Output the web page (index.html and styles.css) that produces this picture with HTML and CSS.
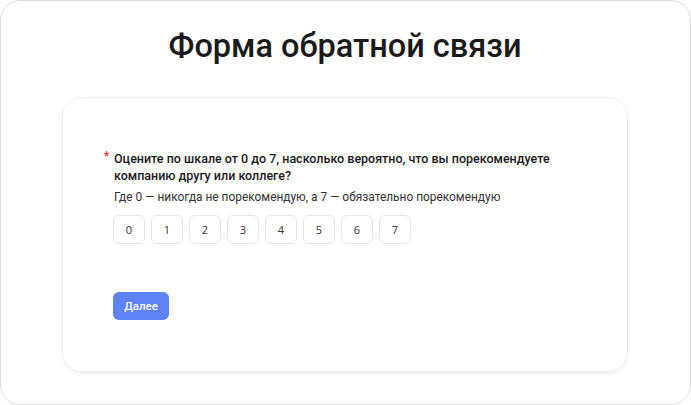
FILE: index.html
```html
<!DOCTYPE html>
<html lang="ru">
<head>
<meta charset="utf-8">
<link rel="stylesheet" href="styles.css">
</head>
<body>
<div class="frame">
  <h1 class="title">Форма обратной связи</h1>
  <div class="card">
    <div class="question">
      <div class="label"><span class="req">*</span>Оцените по шкале от 0 до 7, насколько вероятно, что вы порекомендуете компанию другу или коллеге?</div>
      <div class="hint">Где 0 — никогда не порекомендую, а 7 — обязательно порекомендую</div>
      <div class="scale">
        <button class="opt">0</button>
        <button class="opt">1</button>
        <button class="opt">2</button>
        <button class="opt">3</button>
        <button class="opt">4</button>
        <button class="opt">5</button>
        <button class="opt">6</button>
        <button class="opt">7</button>
      </div>
    </div>
    <button class="next">Далее</button>
  </div>
</div>
</body>
</html>
```
FILE: styles.css
```css
html, body {
  margin: 0;
  padding: 0;
  background: #fff;
}
body {
  font-family: "Roboto", "Noto Sans", sans-serif;
  color: #222;
}
.frame {
  box-sizing: border-box;
  width: 691px;
  height: 405px;
  border: 1px solid #dcdcdc;
  border-radius: 20px;
  padding: 23px 62px 0 61px;
  display: flex;
  flex-direction: column;
  align-items: stretch;
}
.title {
  margin: 0;
  text-align: center;
  font-size: 32.5px;
  font-weight: 500;
  line-height: 44px;
  color: #1a1a1a;
}
.card {
  margin-top: 29px;
  height: 275px;
  box-sizing: border-box;
  border: 1px solid #eeeeee;
  border-radius: 20px;
  box-shadow: 0 2px 4px rgba(0,0,0,0.06);
  padding: 52px 40px 0 51px;
}
.label {
  position: relative;
  font-size: 12.5px;
  font-weight: 500;
  line-height: 17px;
  color: #1a1a1a;
}
.req {
  position: absolute;
  left: -10px;
  top: -2px;
  color: #e5332a;
  font-size: 12px;
}
.hint {
  margin-top: 5px;
  font-size: 11.9px;
  line-height: 17px;
  color: #333;
}
.scale {
  display: flex;
  gap: 6px;
  margin-top: 9px;
  margin-left: -1px;
}
.opt {
  width: 32px;
  height: 29px;
  border: 1px solid #e6e6e6;
  border-radius: 6px;
  background: #fff;
  font-family: "Open Sans", sans-serif;
  font-size: 11px;
  color: #333;
  padding: 0;
}
.next {
  margin-top: 48px;
  margin-left: -1px;
  width: 56px;
  height: 28px;
  border: none;
  border-radius: 6px;
  background: #5f82f4;
  color: #fff;
  font-family: "Roboto", sans-serif;
  font-size: 11.5px;
  font-weight: 500;
  padding: 0;
}
```
